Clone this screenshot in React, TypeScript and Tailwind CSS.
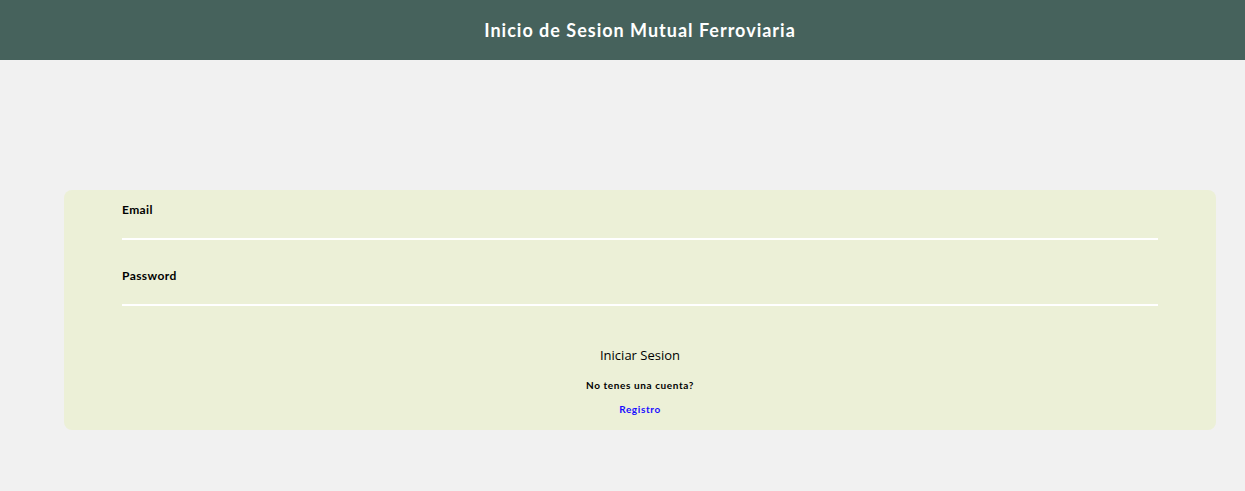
export default function App() {
  return (
    <div className="min-h-[491px] w-full bg-[#f1f1f1] font-['Lato',sans-serif]">
      <header className="flex h-[60px] items-center justify-center bg-[#46625c] pl-[35px]">
        <h1 className="text-[18px] font-bold tracking-[1px] text-white">
          Inicio de Sesion Mutual Ferroviaria
        </h1>
      </header>

      <main className="pt-[130px]">
        <form className="ml-[64px] w-[1152px] rounded-[8px] bg-[#ecf0d7] px-[58px] pb-[15px] pt-[13px]">
          <div className="flex flex-col">
            <label className="text-[12px] font-bold leading-[14px] tracking-[0.4px] text-black">Email</label>
            <input
              type="email"
              className="mt-[10px] h-[13px] border-b-2 border-white bg-transparent outline-none"
            />
          </div>
          <div className="mt-[29px] flex flex-col">
            <label className="text-[12px] font-bold leading-[14px] tracking-[0.4px] text-black">Password</label>
            <input
              type="password"
              className="mt-[10px] h-[13px] border-b-2 border-white bg-transparent outline-none"
            />
          </div>

          <div className="mt-[40px] flex flex-col items-center">
            <button
              type="button"
              className="font-['Open_Sans',sans-serif] text-[13px] font-normal leading-[18px] text-black"
            >
              Iniciar Sesion
            </button>
            <p className="mt-[15px] text-[10px] font-bold leading-[12px] tracking-[0.6px] text-black">
              No tenes una cuenta?
            </p>
            <a href="#" className="mt-[12px] text-[10px] font-bold leading-[12px] tracking-[0.6px] text-[#1a0dff]">
              Registro
            </a>
          </div>
        </form>
      </main>
    </div>
  );
}
